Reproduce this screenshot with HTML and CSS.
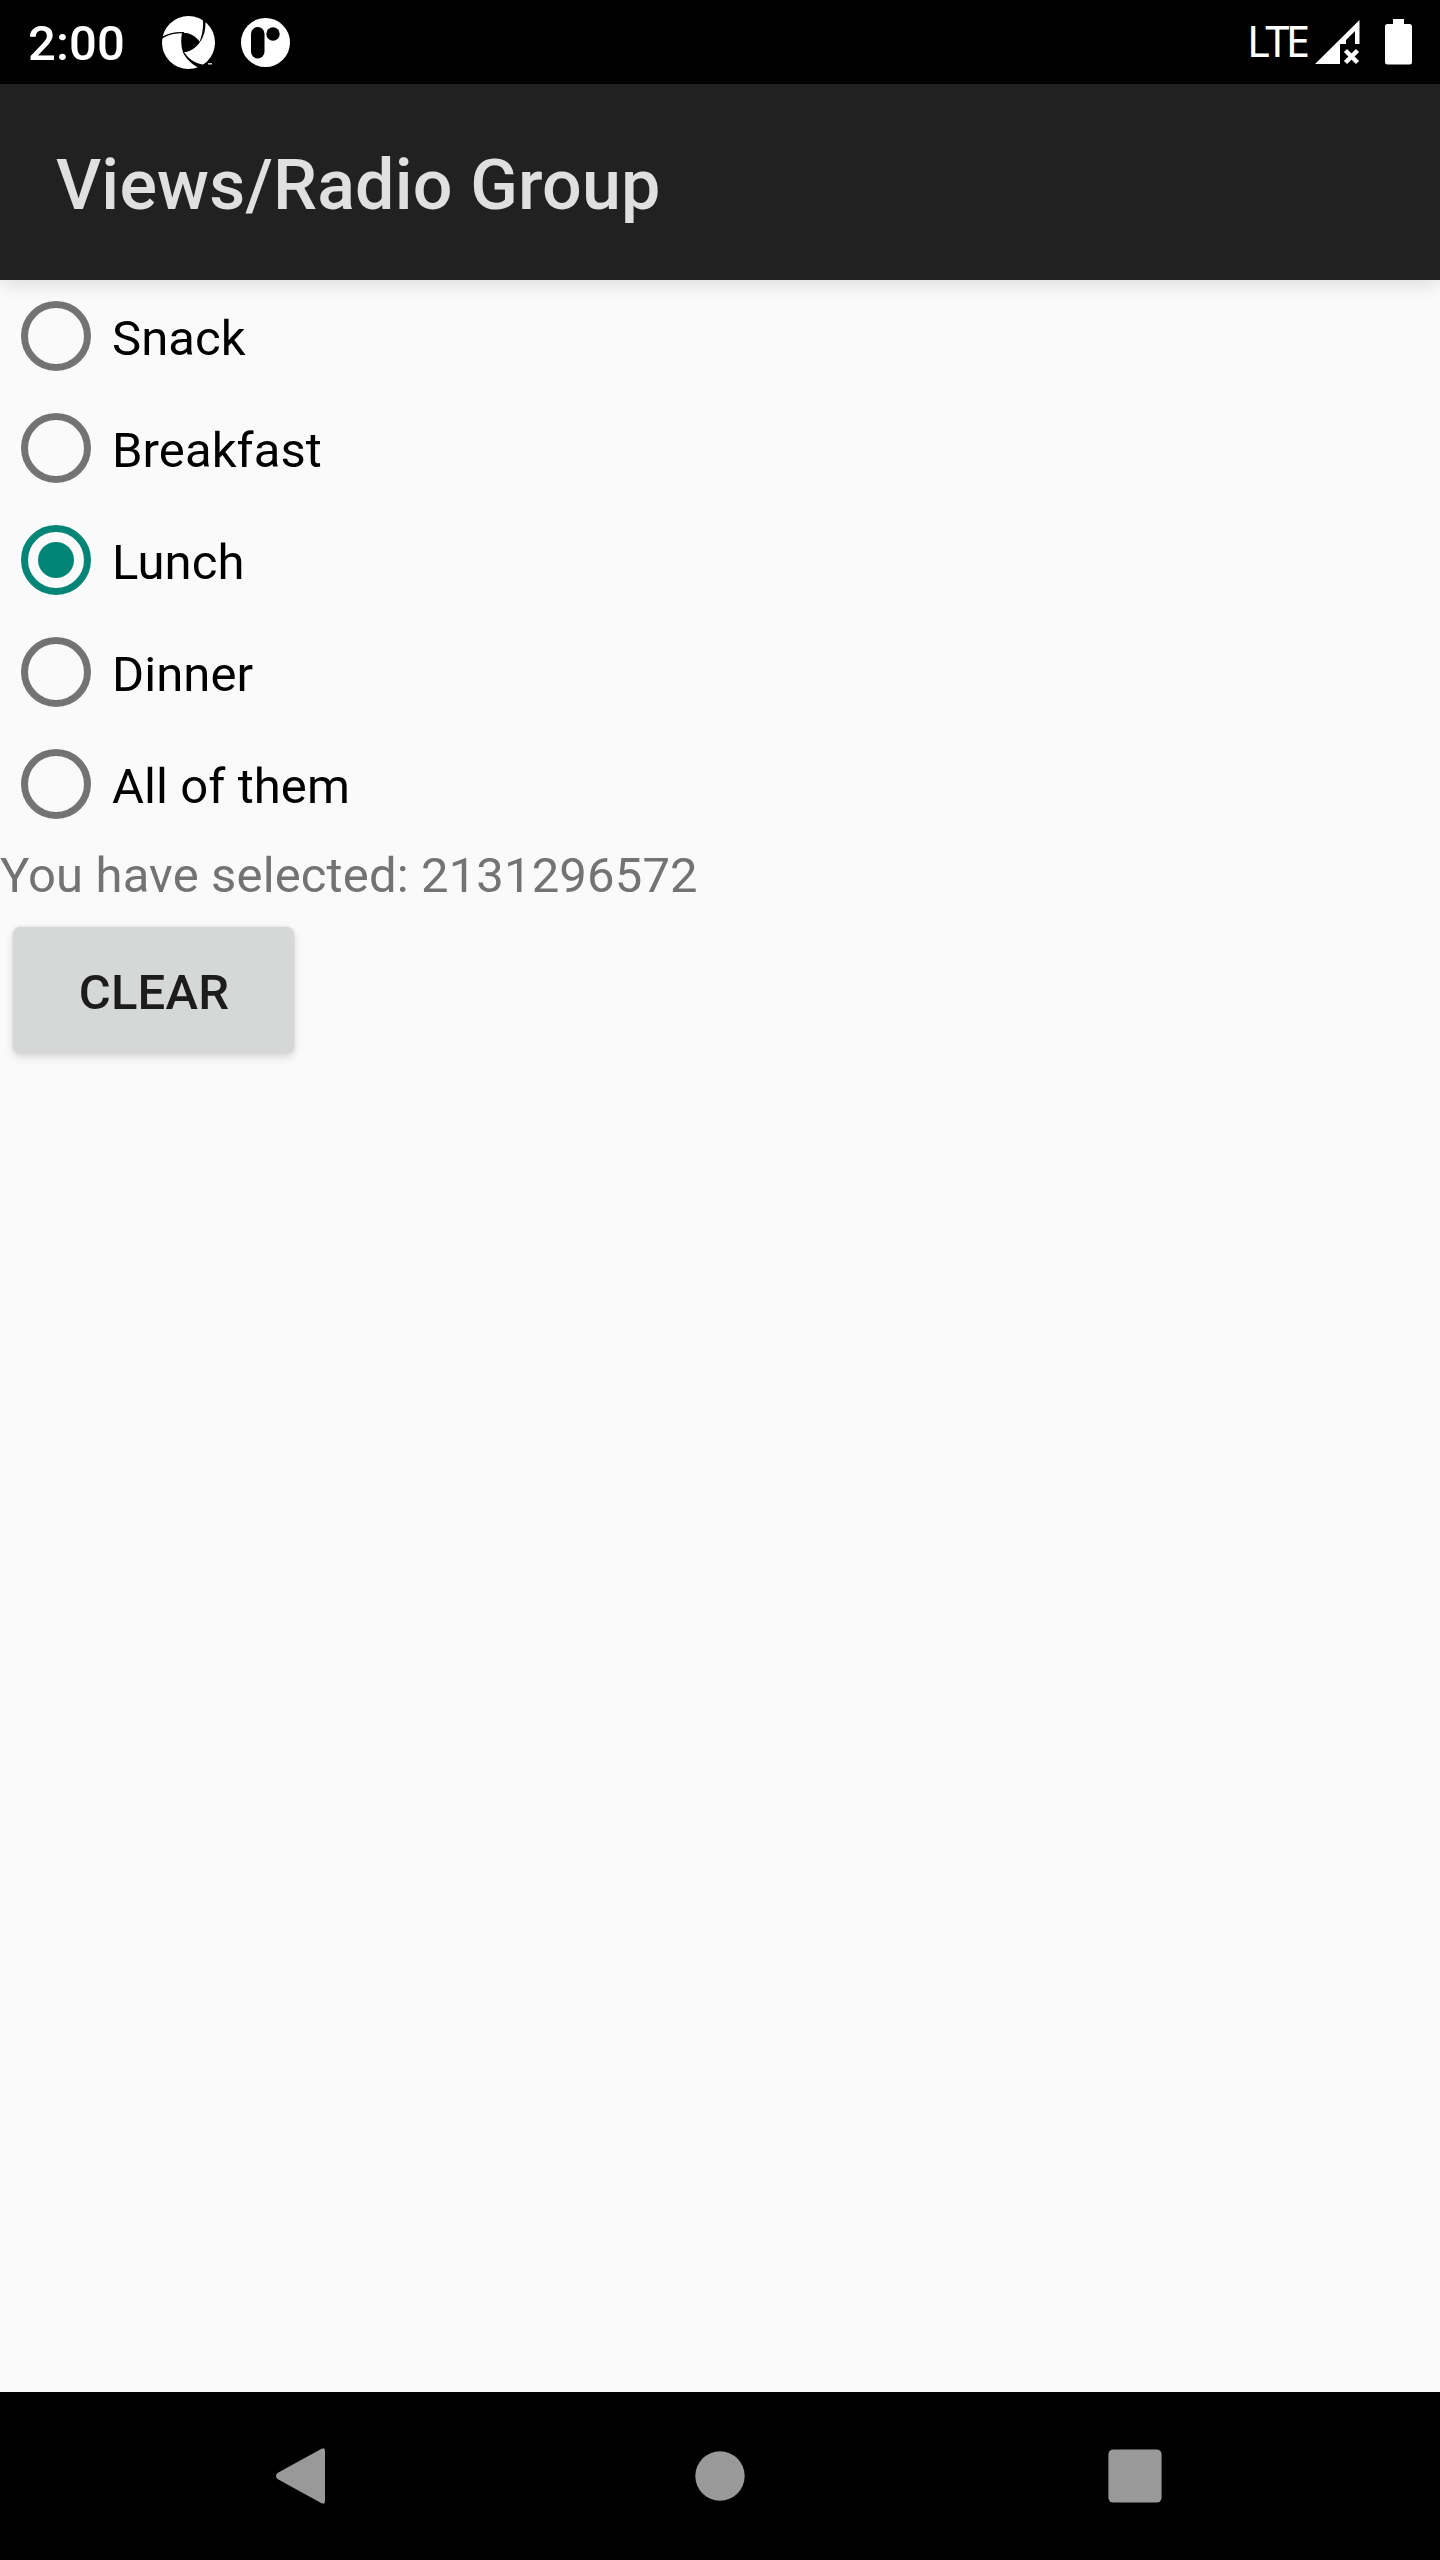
FILE: index.html
```html
<!DOCTYPE html>
<html lang="en">
<head>
<meta charset="utf-8">
<title>Views/Radio Group</title>
<link rel="stylesheet" href="styles.css">
</head>
<body>
<div class="screen">
  <header class="status-bar">
    <span class="clock">2:00</span>
    <svg class="icon-aperture" width="54" height="54" viewBox="0 0 54 54">
      <circle cx="26.500" cy="26.500" r="26.500" fill="#fff"/>
      <path d="M20 16.800C27 16.500 33 19.500 38 26C34 32 28 36 21 36.300C18.800 30 18.800 23 20 16.800Z" fill="#000"/>
      <path d="M-1 23.500C6 18.500 13 17.300 22 17.300V16C13 15.700 6 17 0 20.800ZM40.500 1C41.800 8 41 17 37.500 26L38.800 25C42.500 19 44 12 43.300 4ZM20.800 36C24 43 30 48.500 37 52L45 49C36 49 27 44 22 36Z" fill="#000"/>
      <path d="M46 47.800h4" stroke="#ccc" stroke-width="1.500"/>
    </svg>
    <svg class="icon-r" width="49" height="49" viewBox="0 0 49 49">
      <circle cx="24.500" cy="24.500" r="24.500" fill="#fff"/>
      <rect x="10" y="9" width="13.500" height="31.500" rx="6.750" fill="#000"/>
      <circle cx="32" cy="16" r="6.700" fill="#000"/>
    </svg>
    <span class="network">LTE</span>
    <svg class="icon-signal" width="45" height="45" viewBox="0 0 45 45" fill="#fff">
      <path d="M0 44L44.500 0V24H40V11L31 20V24H25V44Z"/>
      <path d="M30.500 30.500L42.500 42.500M42.500 30.500L30.500 42.500" stroke="#fff" stroke-width="4.500"/>
    </svg>
    <svg class="icon-battery" width="27" height="46" viewBox="0 0 27 46" fill="#fff">
      <path d="M8 0H19V5H24.500Q27 5 27 7.500V43Q27 45.500 24.500 45.500H2.500Q0 45.500 0 43V7.500Q0 5 2.500 5H8Z"/>
    </svg>
  </header>
  <div class="action-bar"><h1>Views/Radio Group</h1></div>
  <main class="content">
    <div class="radio-group">
      <label class="option"><span class="ring"></span><span class="label">Snack</span></label>
      <label class="option"><span class="ring"></span><span class="label">Breakfast</span></label>
      <label class="option"><span class="ring checked"></span><span class="label">Lunch</span></label>
      <label class="option"><span class="ring"></span><span class="label">Dinner</span></label>
      <label class="option"><span class="ring"></span><span class="label">All of them</span></label>
    </div>
    <p class="selection">You have selected: 2131296572</p>
    <button class="clear" type="button">CLEAR</button>
  </main>
  <nav class="nav-bar">
    <svg width="56" height="56" viewBox="0 0 56 56" fill="#999"><path d="M1.500 25L45.500 .7Q49 -.8 49 3V53Q49 56.800 45.500 55.300L1.500 31Q-1.500 28 1.500 25Z"/></svg>
    <svg width="56" height="56" viewBox="0 0 56 56" fill="#999"><circle cx="28" cy="28" r="24.700"/></svg>
    <svg width="56" height="56" viewBox="0 0 56 56" fill="#999"><rect x="1.400" y="1.400" width="53.200" height="53.200" rx="5"/></svg>
  </nav>
</div>
</body>
</html>
```
FILE: styles.css
```css
* { box-sizing: border-box; }
body { margin: 0; font-family: Roboto, sans-serif; }
.screen { width: 1440px; height: 2560px; display: flex; flex-direction: column; background: #fafafa; }
.status-bar { height: 84px; background: #000; color: #fff; display: flex; align-items: flex-start; padding: 0 28px; }
.clock { font-size: 49px; font-weight: 500; line-height: 56px; margin-top: 16px; width: 134px; white-space: nowrap; letter-spacing: .1px; }
.icon-aperture { margin-top: 16px; margin-right: 25px; }
.icon-r { margin-top: 18px; }
.network { margin-left: auto; margin-top: 12px; width: 68px; font-family: "Noto Sans", sans-serif; font-size: 43.5px; line-height: 56px; letter-spacing: -3.7px; }
.icon-signal { margin-top: 20px; margin-right: 25px; }
.icon-battery { margin-top: 19px; }
.action-bar { position: relative; height: 196px; padding: 6px 56px 0; background: #212121; color: #e0e0e0; display: flex; align-items: center; box-shadow: 0 4px 18px rgba(0, 0, 0, .12); }
h1 { margin: 0; font-size: 70px; font-weight: 500; line-height: 84px; letter-spacing: .18px; }
.content { flex: 1; display: flex; flex-direction: column; align-items: flex-start; }
.option { height: 112px; padding-left: 21px; display: flex; align-items: center; gap: 21px; font-size: 49px; line-height: 58px; letter-spacing: .08px; color: #000; }
.ring { width: 70px; height: 70px; border: 7px solid #737373; border-radius: 50%; display: grid; place-items: center; }
.checked { border-color: #008577; }
.checked::before { content: ""; width: 36px; height: 36px; border-radius: 50%; background: #008577; }
.label { padding-top: 6px; }
.selection { margin: 0; padding-top: 1px; font-size: 49px; line-height: 70px; letter-spacing: .14px; color: #737373; }
.clear { margin: 16px 0 0 13px; padding: 5px 0 0 1px; width: 281px; height: 126px; border: 0; border-radius: 7px; background: #d6d7d7; color: #1c1c1c; font: 500 49px/58px Roboto, sans-serif; letter-spacing: .2px; box-shadow: 0 4px 8px rgba(0, 0, 0, .14), 0 0 3px rgba(0, 0, 0, .1); }
.nav-bar { height: 168px; background: #000; display: flex; align-items: center; justify-content: space-between; padding: 0 277px 0 276px; }
```
